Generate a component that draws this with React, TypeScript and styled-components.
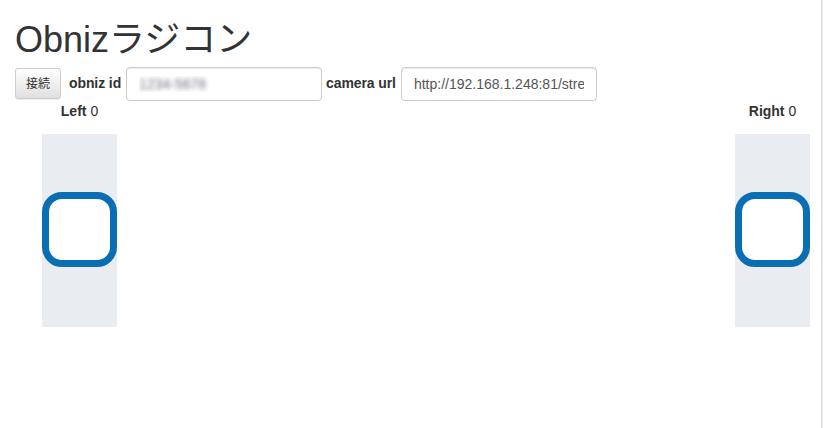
import * as React from 'react';
import styled, { createGlobalStyle } from 'styled-components';

const GlobalStyle = createGlobalStyle`
  html, body {
    margin: 0;
    padding: 0;
    background: #fff;
  }
  body {
    font-family: "Liberation Sans", Arial, "Noto Sans CJK JP", sans-serif;
    font-size: 14px;
    line-height: 1.42857;
    color: #333;
  }
  * {
    box-sizing: border-box;
  }
`;

const Page = styled.div`
  display: flow-root;
  width: 823px;
  min-height: 428px;
  border-right: 2px solid #e3e3e3;
`;

const Container = styled.div`
  padding: 0 15px;
`;

const Title = styled.h1`
  margin: 20px 0 7px;
  font-size: 36px;
  font-weight: 400;
  line-height: 1.1;
  font-family: "Liberation Sans", Arial, "Noto Sans CJK JP", sans-serif;
  color: #333;
`;

const Form = styled.div`
  display: flex;
  align-items: center;
`;

const Button = styled.button`
  height: 31px;
  padding: 5px 10px;
  font-size: 12px;
  line-height: 1.5;
  font-family: "Liberation Sans", "Noto Sans CJK JP", sans-serif;
  color: #333;
  border: 1px solid #ccc;
  border-radius: 3px;
  background: linear-gradient(to bottom, #fff 0, #e0e0e0 100%);
  box-shadow: inset 0 1px 0 rgba(255, 255, 255, 0.15), 0 1px 1px rgba(0, 0, 0, 0.075);
  margin-right: 8px;
`;

const Label = styled.label`
  font-weight: 700;
  letter-spacing: -0.1px;
  margin-right: 5px;
`;

const Input = styled.input<{ $hidden?: boolean }>`
  width: 196px;
  height: 34px;
  padding: 6px 12px;
  font-size: 14px;
  font-family: "Liberation Sans", Arial, sans-serif;
  color: ${(p) => (p.$hidden ? 'transparent' : '#555')};
  text-shadow: ${(p) => (p.$hidden ? '0 0 4px rgba(60, 60, 80, 0.7)' : 'none')};
  border: 1px solid #ccc;
  border-radius: 4px;
  box-shadow: inset 0 1px 1px rgba(0, 0, 0, 0.075);
  background: #fff;
  margin-right: 4px;
  outline: none;
`;

const Controls = styled.div`
  display: flex;
  justify-content: space-between;
  padding: 0 11px 0 42px;
`;

const Stick = styled.div`
  display: flex;
  flex-direction: column;
  align-items: center;
  width: 75px;
`;

const StickLabel = styled.div`
  height: 20px;
  line-height: 20px;
  white-space: nowrap;
  margin-bottom: 13px;

  b {
    font-weight: 700;
  }
`;

const Track = styled.div`
  width: 75px;
  height: 193px;
  background: #e9ecf1;
  display: flex;
  align-items: center;
  justify-content: center;
`;

const Thumb = styled.div`
  width: 75px;
  height: 75px;
  margin-top: -2px;
  border: 7px solid #0a6eb4;
  border-radius: 20px;
  background: #fff;
`;

function Slider({ name, value }: { name: string; value: number }) {
  return (
    <Stick>
      <StickLabel>
        <b>{name}</b> {value}
      </StickLabel>
      <Track>
        <Thumb />
      </Track>
    </Stick>
  );
}

export default function App() {
  return (
    <Page>
      <GlobalStyle />
      <Container>
        <Title>Obnizラジコン</Title>
        <Form>
          <Button>接続</Button>
          <Label>obniz id</Label>
          <Input $hidden defaultValue="1234-5678" />
          <Label>camera url</Label>
          <Input defaultValue="http://192.168.1.248:81/stream" />
        </Form>
      </Container>
      <Controls>
        <Slider name="Left" value={0} />
        <Slider name="Right" value={0} />
      </Controls>
    </Page>
  );
}
